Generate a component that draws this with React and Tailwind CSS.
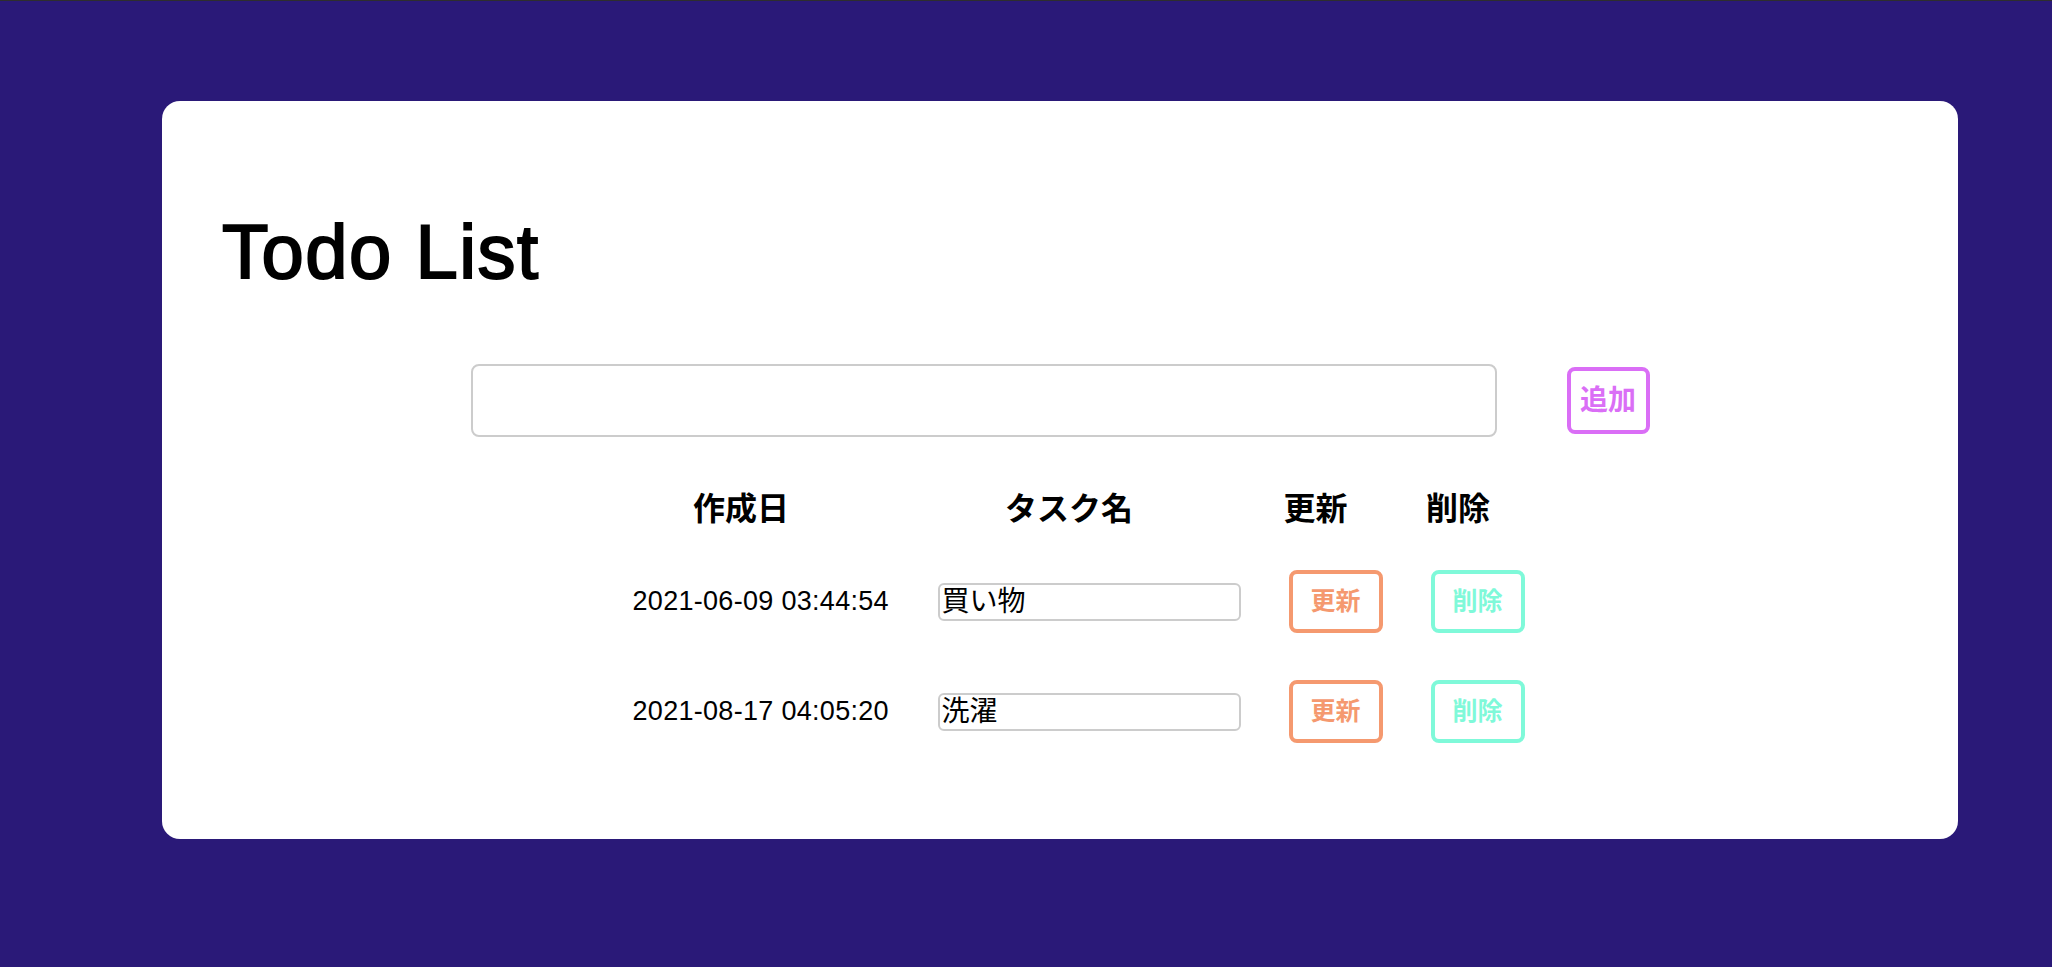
import React, { useState } from "react";

const initialTodos = [
  { id: 1, createdAt: "2021-06-09 03:44:54", title: "買い物" },
  { id: 2, createdAt: "2021-08-17 04:05:20", title: "洗濯" },
];

const App = () => {
  const [todos, setTodos] = useState(initialTodos);
  const [newTask, setNewTask] = useState("");

  const handleChange = (id, value) => {
    setTodos(todos.map((t) => (t.id === id ? { ...t, title: value } : t)));
  };

  return (
    <div
      className="min-h-[967px] bg-[#2a1978] border-t border-[#2e2e2e] pt-[100px] pb-[128px]"
      style={{ fontFamily: '"Liberation Sans", "Noto Sans CJK JP", sans-serif' }}
    >
      <div className="ml-[162px] w-[1796px] h-[738px] bg-white rounded-[18px] pt-[113px] px-[60px]">
        <h1 className="text-[76px] leading-[76px] tracking-[1.5px] text-black [-webkit-text-stroke:2px_black]">
          Todo List
        </h1>

        {/* input row */}
        <div className="flex items-center justify-center gap-[70px] mt-[74px]">
          <input
            type="text"
            value={newTask}
            onChange={(e) => setNewTask(e.target.value)}
            className="w-[1026px] h-[73px] border-2 border-[#cccccc] rounded-[8px] px-2 text-[26px] outline-none"
          />
          <button className="w-[83px] h-[67px] border-[4px] border-[#da6ef6] rounded-[8px] text-[#da6ef6] text-[28px] font-bold">
            追加
          </button>
        </div>

        {/* table */}
        <div className="flex justify-center mt-[52px] -translate-x-[1px]">
          <div className="grid grid-cols-[297px_343px_134px_135px] gap-x-[8px]">
            <div className="h-[40px] flex items-center justify-center text-[32px] font-bold">作成日</div>
            <div className="h-[40px] flex items-center justify-center text-[32px] font-bold">タスク名</div>
            <div className="h-[40px] flex items-center justify-center text-[32px] font-bold">更新</div>
            <div className="h-[40px] flex items-center justify-center text-[32px] font-bold">削除</div>

            {todos.map((todo, i) => (
              <React.Fragment key={todo.id}>
                <div className={`pl-[40px] h-[61px] flex items-center text-[27px] tracking-[0.3px] ${i === 0 ? "mt-[42px]" : "mt-[49px]"}`}>
                  {todo.createdAt}
                </div>
                <div className={`pl-[40px] h-[61px] flex items-center ${i === 0 ? "mt-[42px]" : "mt-[49px]"}`}>
                  <input
                    type="text"
                    value={todo.title}
                    onChange={(e) => handleChange(todo.id, e.target.value)}
                    className="w-[303px] h-[38px] border-2 border-[#cccccc] rounded-[6px] px-[2px] text-[28px] text-black outline-none"
                  />
                </div>
                <div className={`pl-[40px] h-[61px] flex items-center ${i === 0 ? "mt-[42px]" : "mt-[49px]"}`}>
                  <button className="w-[94px] h-[63px] border-[4px] border-[#f5996f] rounded-[8px] text-[#f5996f] text-[25px] font-bold">
                    更新
                  </button>
                </div>
                <div className={`pl-[40px] h-[61px] flex items-center ${i === 0 ? "mt-[42px]" : "mt-[49px]"}`}>
                  <button
                    onClick={() => setTodos(todos.filter((t) => t.id !== todo.id))}
                    className="w-[94px] h-[63px] border-[4px] border-[#7ff9d9] rounded-[8px] text-[#7ff9d9] text-[25px] font-bold"
                  >
                    削除
                  </button>
                </div>
              </React.Fragment>
            ))}
          </div>
        </div>
      </div>
    </div>
  );
};

export default App;
